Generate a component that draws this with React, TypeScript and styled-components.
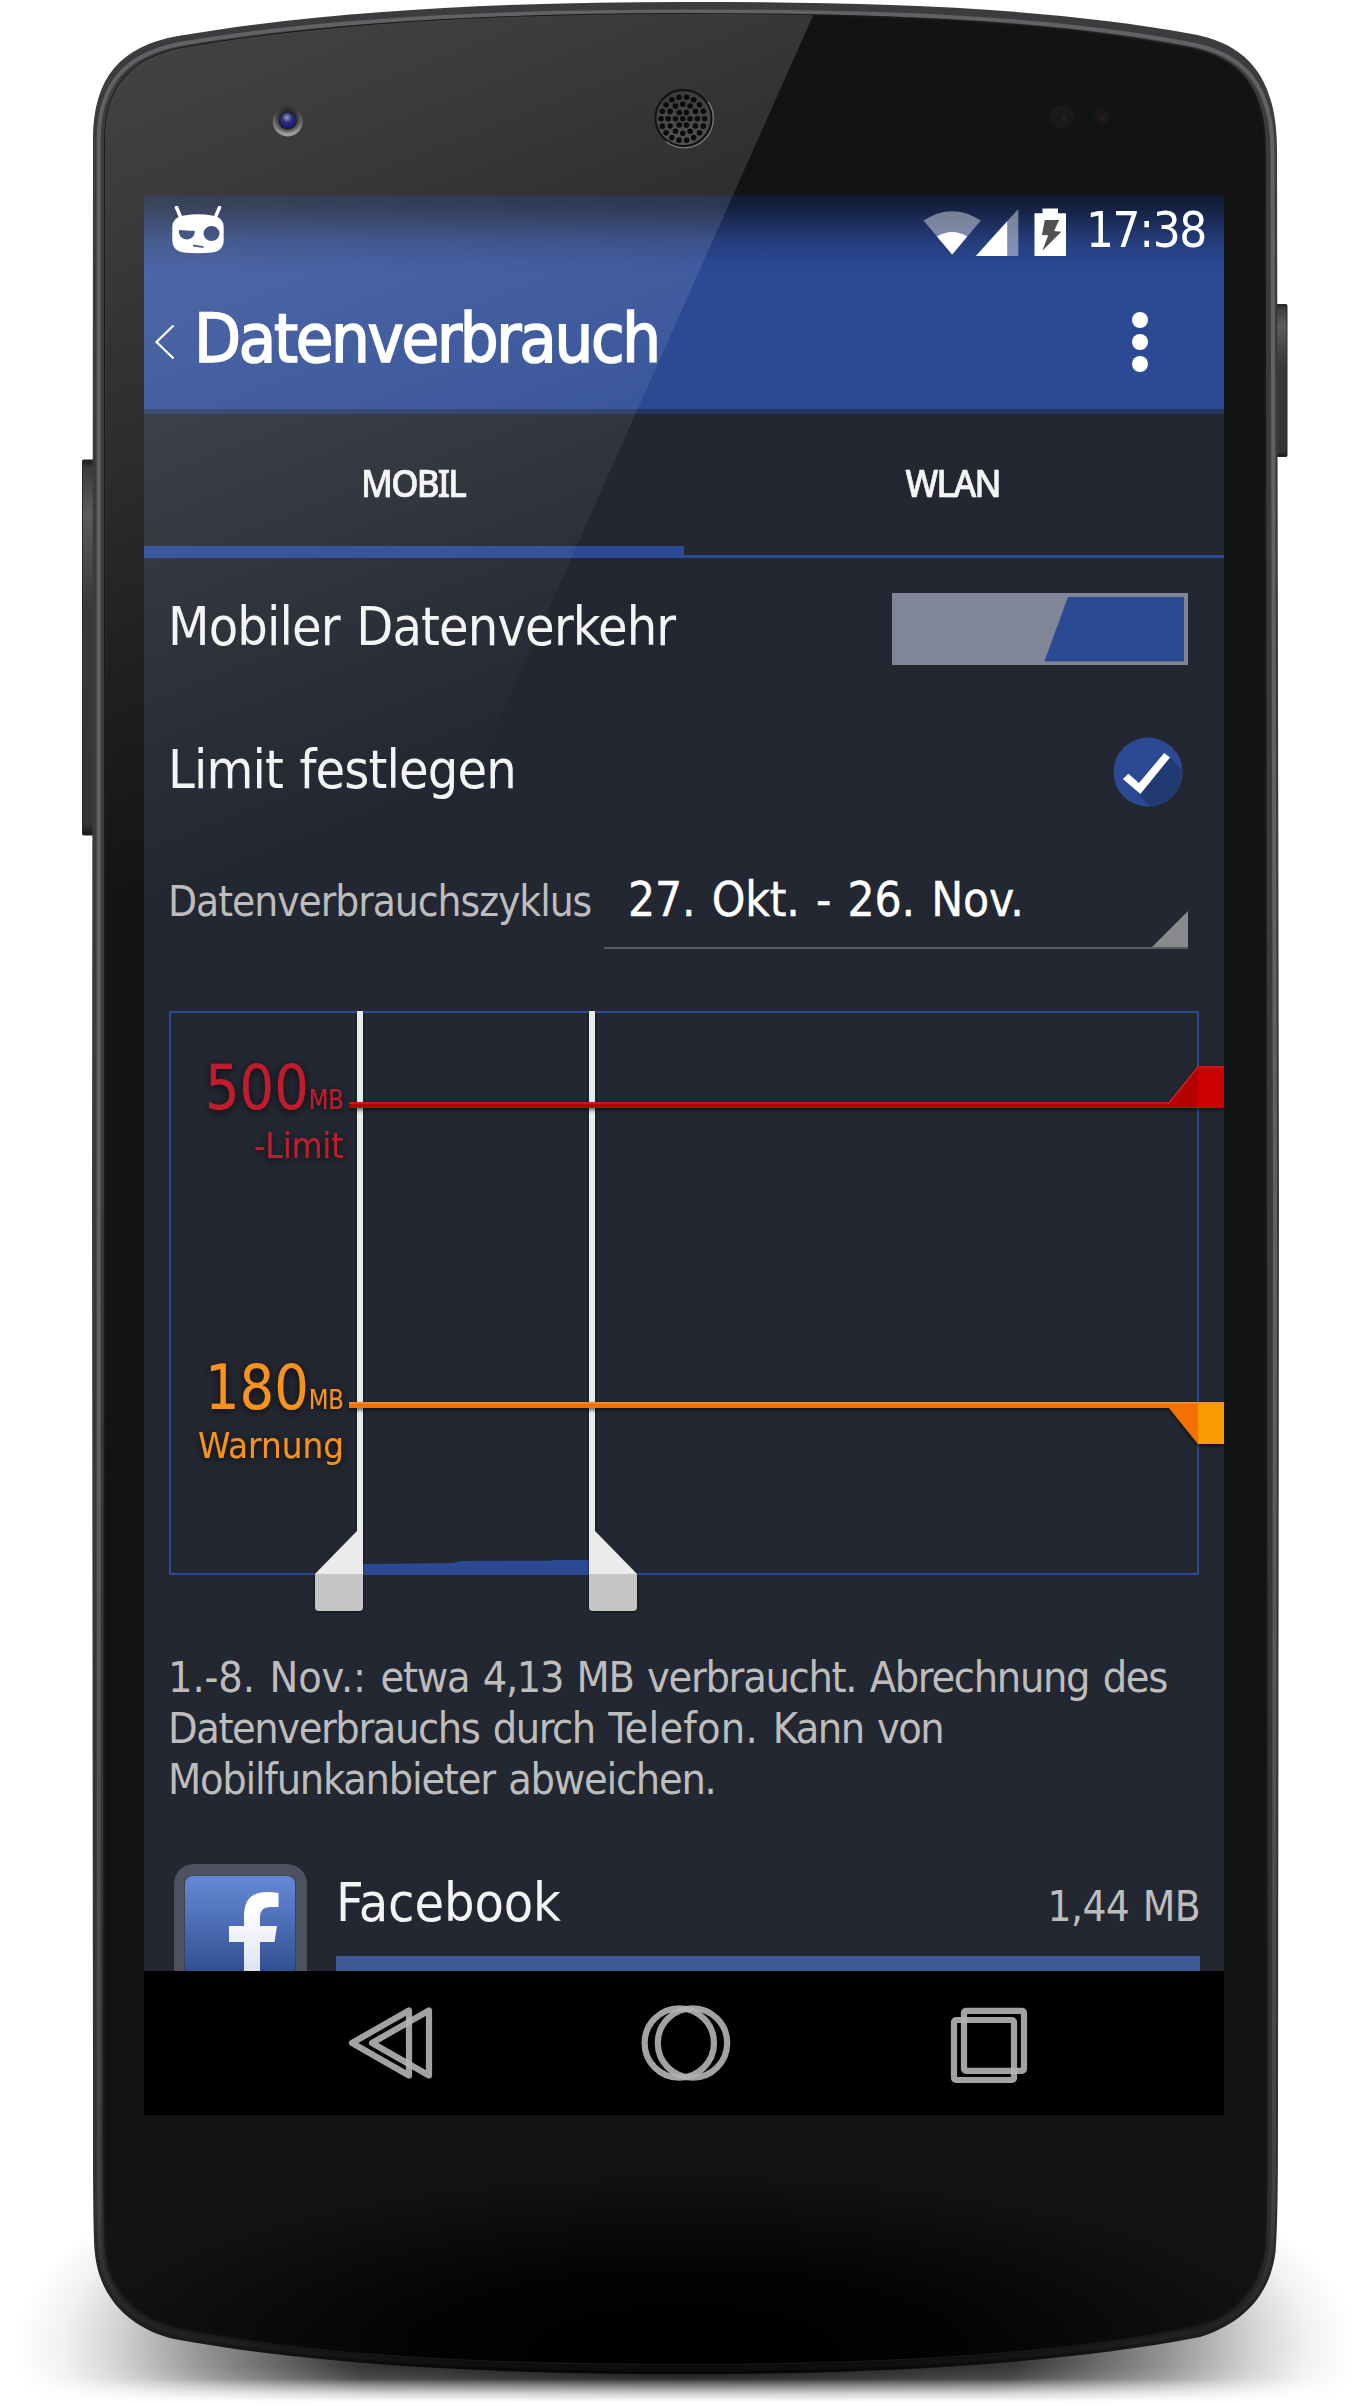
import React from "react";
import styled, { createGlobalStyle } from "styled-components";

const TEXT = '"DejaVu Sans Condensed", "DejaVu Sans", sans-serif';

const Global = createGlobalStyle`
  body { margin: 0; background: #fff; }
  * { box-sizing: border-box; }
`;

const Stage = styled.div`
  position: relative;
  width: 1370px;
  height: 2405px;
  padding: 195px 146px 0 144px;
  overflow: hidden;
  background: #fff;
  font-family: ${TEXT};
  font-stretch: condensed;
`;

const Layer = styled.svg`
  position: absolute;
  inset: 0;
  pointer-events: none;
`;

const Screen = styled.main`
  position: relative;
  display: flex;
  flex-direction: column;
  width: 1080px;
  height: 1920px;
  overflow: hidden;
  background: #232731;
`;

const Header = styled.header`
  height: 219px;
  border-bottom: 5px solid #253661;
  background: linear-gradient(#101a33 0px, #14203f 12px, #243c79 45px, #2a4791 68px, #2c4a94 80px);
`;

const StatusBar = styled.div`
  display: flex;
  align-items: center;
  height: 70px;
  padding: 1px 18px 0 28px;
`;

const StatusIcons = styled.div`
  display: flex;
  align-items: center;
  margin-left: auto;
`;

const Clock = styled.time`
  margin-left: 20px;
  color: #fff;
  font-size: 49px;
  line-height: 66px;
  letter-spacing: -1.4px;
`;

const AppBar = styled.div`
  display: flex;
  align-items: center;
  height: 144px;
  padding: 0 75px 0 10px;

  > svg {
    margin-top: 10px;
  }
`;

const Title = styled.h1`
  flex: 1;
  margin: 3px 0 0 18px;
  color: #fff;
  font-size: 68px;
  font-weight: 400;
  line-height: 80px;
  letter-spacing: -2.28px;
  -webkit-text-stroke: 1.7px #fff;
`;

const Tabs = styled.nav`
  display: flex;
  height: 144px;
`;

const Tab = styled.button<{ $active?: boolean }>`
  display: flex;
  flex: 1;
  align-items: center;
  justify-content: center;
  padding: 4px 2px 12px 0;
  border: 0;
  background: linear-gradient(#2c4a94, #2c4a94) bottom / 100% ${(p) => (p.$active ? 12 : 3)}px no-repeat;
  color: #f4f4f4;
  font-family: "Noto Sans", sans-serif;
  font-size: 37.5px;
  font-weight: 500;
  letter-spacing: -1.9px;
  -webkit-text-stroke: 0.7px #f4f4f4;
`;

const TabLabel = styled.span`
  transform: scaleX(0.93);
`;

const Content = styled.section`
  flex: 1;
  min-height: 0;
  overflow: hidden;
`;

const Row = styled.div<{ $height: number; $right: number }>`
  display: flex;
  align-items: center;
  justify-content: space-between;
  height: ${(p) => p.$height}px;
  padding: 0 ${(p) => p.$right}px 0 24px;
`;

const RowLabel = styled.span`
  padding-bottom: 5px;
  color: #f4f4f4;
  font-size: 53.5px;
  line-height: 60px;
  letter-spacing: -0.85px;
  word-spacing: 2px;
  white-space: nowrap;
`;

const CycleRow = styled.div`
  display: flex;
  height: 105px;
  padding: 0 36px 0 24px;
`;

const CycleLabel = styled.span`
  width: 436px;
  padding-top: 32px;
  color: #bdbdbd;
  font-size: 42px;
  line-height: 51px;
  letter-spacing: -1.02px;
  white-space: nowrap;
`;

const CycleSelect = styled.div`
  display: flex;
  flex: 1;
  justify-content: space-between;
  align-items: flex-end;
  border-bottom: 2px solid #58595d;
`;

const CycleValue = styled.span`
  align-self: flex-start;
  padding: 30px 0 0 24px;
  color: #fff;
  font-size: 47.5px;
  line-height: 51px;
  letter-spacing: -0.2px;
  word-spacing: 3px;
  white-space: nowrap;
  -webkit-text-stroke: 0.4px #fff;
`;

const ChartSvg = styled.svg`
  display: block;
  font-family: ${TEXT};
  font-stretch: condensed;
`;

const Summary = styled.p`
  margin: 0;
  padding-left: 24px;
  height: 212px;
  color: #bdbdbd;
  font-size: 42.8px;
  line-height: 51px;
  word-spacing: 2.5px;
  white-space: nowrap;
`;

const Line = styled.span`
  display: block;
`;

const Run = styled.span<{ $spacing: number }>`
  letter-spacing: ${(p) => p.$spacing}px;
`;

const AppRow = styled.div`
  display: flex;
  padding: 0 24px 0 30px;
`;

const AppInfo = styled.div`
  display: grid;
  flex: 1;
  grid-template-rows: 92px 20px;
  margin-left: 29px;
`;

const AppHead = styled.div`
  display: flex;
  align-items: flex-start;
  justify-content: space-between;
`;

const AppName = styled.span`
  padding-top: 9px;
  color: #f4f4f4;
  font-size: 53.5px;
  line-height: 60px;
  letter-spacing: -0.1px;
`;

const AppUsage = styled.span`
  padding-top: 13px;
  color: #bdbdbd;
  font-size: 42px;
  line-height: 60px;
  letter-spacing: -0.6px;
  word-spacing: 2px;
`;

const UsageBar = styled.div`
  background: #3e5896;
`;

const NavBar = styled.footer`
  display: flex;
  align-items: center;
  height: 144px;
  padding-left: 200px;
  background: #000;
`;

const NavIcon = styled.svg<{ $gap: number }>`
  margin-left: ${(p) => p.$gap}px;
`;

const BODY =
  "M93 140 C93 76 122 46 178 36 C330 10 510 2 685 2 C860 2 1040 6 1192 34 C1248 44 1277 78 1277 150 L1279 1200 L1278 2100 C1278 2170 1278 2225 1275.500 2252 C1270 2296 1242 2324 1200 2337 C1050 2366 860 2374 685 2374 C510 2374 325 2367 174 2339 C128 2328 98 2296 94.600 2250 C93 2225 93 2170 93 2100 L92 1200 Z";
const FACE =
  "M105 140 C105 88 130 58 182 48 C330 22 510 14 685 14 C860 14 1040 19 1188 48 C1240 58 1265 88 1265 150 L1266 1200 L1267 2100 C1267 2170 1267 2225 1265 2248 C1260 2288 1235 2316 1197 2326 C1050 2356 860 2364 685 2364 C510 2364 325 2358 178 2328 C134 2318 108 2288 105.500 2248 C104 2225 104 2170 104 2100 L105 1200 Z";
const EDGE =
  "M98.700 140 C98.700 84 126 54 180 44 C330 18 510 11.500 685 11.500 C860 11.500 1040 15 1190 44 C1243 54 1272 84 1272.500 150 L1275 1200 L1274 2100 C1274 2170 1274 2225 1271 2250 C1266 2292 1240 2320 1199 2331 C1050 2361 860 2369 685 2369 C510 2369 325 2362 176 2333 C131 2323 103 2292 100 2249 C98.700 2225 98.700 2170 98.700 2100 Z";

const RINGS = [
  { radius: 0, count: 1 },
  { radius: 7.2, count: 6 },
  { radius: 14.6, count: 12 },
  { radius: 21.8, count: 18 },
];

const speakerHoles = RINGS.flatMap(({ radius, count }) =>
  Array.from({ length: count }, (_, i) => {
    const angle = (i / count) * Math.PI * 2;
    return { x: Math.cos(angle) * radius, y: Math.sin(angle) * radius };
  })
);

function PhoneBody() {
  return (
    <Layer width="1370" height="2405" viewBox="0 0 1370 2405">
      <defs>
        <radialGradient id="wide" cx="0" cy="0" r="1" gradientUnits="userSpaceOnUse" gradientTransform="translate(685 2345) scale(670 250)">
          <stop offset="0" stopOpacity=".95" />
          <stop offset=".5" stopOpacity=".78" />
          <stop offset=".72" stopOpacity=".42" />
          <stop offset=".85" stopOpacity=".17" />
          <stop offset=".93" stopOpacity=".05" />
          <stop offset="1" stopOpacity="0" />
        </radialGradient>
        <linearGradient id="fade" x1="0" x2="0" y1="2366" y2="2402" gradientUnits="userSpaceOnUse">
          <stop offset="0" stopColor="#fff" />
          <stop offset=".35" stopColor="#e6e6e6" />
          <stop offset=".55" stopColor="#8a8a8a" />
          <stop offset=".78" stopColor="#333" />
          <stop offset="1" stopColor="#000" />
        </linearGradient>
        <mask id="floor" maskUnits="userSpaceOnUse" x="0" y="2050" width="1370" height="355">
          <rect y="2050" width="1370" height="355" fill="url(#fade)" />
        </mask>
        <linearGradient id="rim" x1="0" x2="0" y1="0" y2="2374" gradientUnits="userSpaceOnUse">
          <stop offset="0" stopColor="#3c3c3e" />
          <stop offset=".5" stopColor="#3a3a3c" />
          <stop offset=".93" stopColor="#303031" />
          <stop offset=".985" stopColor="#1c1c1c" />
          <stop offset="1" stopColor="#060606" />
        </linearGradient>
        <linearGradient id="shine" x1="0" x2="0" y1="0" y2="2374" gradientUnits="userSpaceOnUse">
          <stop offset="0" stopColor="#626266" />
          <stop offset=".6" stopColor="#606064" />
          <stop offset=".93" stopColor="#404042" />
          <stop offset=".985" stopColor="#202020" />
          <stop offset="1" stopColor="#0a0a0a" />
        </linearGradient>
        <radialGradient id="chin" cx="0" cy="0" r="1" gradientUnits="userSpaceOnUse" gradientTransform="translate(685 2350) scale(620 180)">
          <stop offset="0" stopColor="#000" />
          <stop offset=".4" stopColor="#000" stopOpacity=".9" />
          <stop offset=".7" stopColor="#000" stopOpacity=".45" />
          <stop offset="1" stopColor="#000" stopOpacity="0" />
        </radialGradient>
        <linearGradient id="key" x1="0" x2="0" y1="0" y2="1">
          <stop offset="0" stopColor="#1b1b1b" />
          <stop offset=".02" stopColor="#3a3a3a" />
          <stop offset=".14" stopColor="#5c5c5c" />
          <stop offset=".4" stopColor="#383838" />
          <stop offset=".97" stopColor="#343434" />
          <stop offset="1" stopColor="#151515" />
        </linearGradient>
      </defs>
      <g mask="url(#floor)">
        <rect y="2050" width="1370" height="355" fill="url(#wide)" />
      </g>
      <rect x="82.500" y="460" width="12" height="375" rx="1" fill="url(#key)" stroke="#2a2a2a" />
      <rect x="1275" y="304.500" width="12" height="152" rx="1" fill="url(#key)" stroke="#2a2a2a" />
      <path d={BODY} fill="url(#rim)" />
      <path d={EDGE} fill="none" stroke="url(#shine)" strokeWidth="4" />
      <path d={FACE} fill="#131313" stroke="#191919" strokeWidth="2" />
      <path d={FACE} fill="url(#chin)" />
      <g fill="#1a1919">
        <circle cx="1062" cy="117" r="12" />
        <circle cx="1102" cy="117" r="7.500" />
      </g>
      <ellipse cx="1064" cy="119" rx="2" ry="4" fill="#2c1d18" />
      <ellipse cx="1102" cy="118" rx="2" ry="3" fill="#2c1d18" />
    </Layer>
  );
}

function Gloss() {
  return (
    <Layer width="1370" height="2405" viewBox="0 0 1370 2405">
      <defs>
        <linearGradient id="gloss" x1="0" y1="0" x2="324" y2="837" gradientUnits="userSpaceOnUse">
          <stop offset="0" stopColor="#fff" stopOpacity=".22" />
          <stop offset=".27" stopColor="#fff" stopOpacity=".17" />
          <stop offset=".64" stopColor="#fff" stopOpacity=".08" />
          <stop offset=".83" stopColor="#fff" stopOpacity=".035" />
          <stop offset="1" stopColor="#fff" stopOpacity="0" />
        </linearGradient>
        <clipPath id="face">
          <path d={FACE} />
        </clipPath>
        <linearGradient id="camRing" x1="0" y1="0" x2="0" y2="1">
          <stop offset="0" stopColor="#2b2b2b" />
          <stop offset="1" stopColor="#a5a5a5" />
        </linearGradient>
        <linearGradient id="camInner" x1="0" y1="0" x2="0" y2="1">
          <stop offset="0" stopColor="#29292b" />
          <stop offset="1" stopColor="#6c6c6c" />
        </linearGradient>
        <linearGradient id="grille" x1="0" y1="0" x2="0" y2="1">
          <stop offset="0" stopColor="#3a3a3a" />
          <stop offset="1" stopColor="#555" />
        </linearGradient>
        <radialGradient id="lens" cx=".45" cy=".3" r=".7">
          <stop offset="0" stopColor="#8e9cc0" />
          <stop offset=".5" stopColor="#2a2f78" />
          <stop offset="1" stopColor="#17159a" />
        </radialGradient>
      </defs>
      <path d="M90 0 H820 L450 830 L360 1030 H90 Z" fill="url(#gloss)" clipPath="url(#face)" />
      <circle cx="287.700" cy="121.500" r="15" fill="url(#camRing)" />
      <circle cx="287.700" cy="120.500" r="12" fill="url(#camInner)" />
      <circle cx="287.700" cy="120.500" r="9.500" fill="#232328" />
      <circle cx="287.700" cy="120.500" r="7.500" fill="url(#lens)" />
      <circle cx="683.500" cy="118" r="28" fill="url(#grille)" stroke="#111" strokeWidth="2" />
      <path d="M666 141.500 A29.300 29.300 0 0 0 708 101.500" fill="none" stroke="#777" strokeWidth="1.300" />
      <g fill="#0b0b0b">
        {speakerHoles.map((hole, i) => (
          <circle key={i} cx={682.8 + hole.x} cy={118.7 + hole.y} r="2.800" />
        ))}
      </g>
    </Layer>
  );
}

function Chart() {
  return (
    <ChartSvg width="1080" height="703" viewBox="144 949 1080 703">
      <defs>
        <filter id="glow" x="-20%" y="-30%" width="140%" height="160%">
          <feDropShadow dx="0" dy="2" stdDeviation="4" floodColor="#000" floodOpacity=".75" />
        </filter>
        <filter id="drop" x="315" y="1000" width="909" height="650" filterUnits="userSpaceOnUse">
          <feDropShadow dx="0" dy="2" stdDeviation="2" floodColor="#000" floodOpacity=".6" />
        </filter>
        <filter id="soft" x="300" y="1000" width="360" height="640" filterUnits="userSpaceOnUse">
          <feDropShadow dx="0" dy="1" stdDeviation="1.500" floodColor="#000" floodOpacity=".6" />
        </filter>
      </defs>
      <rect x="170" y="1012" width="1028" height="562" fill="none" stroke="#2c4a94" strokeWidth="2" />
      <path d="M362 1575 V1564 L417 1563.500 L453 1563 L461 1561 L550 1560.700 L553 1560 H590 V1575 Z" fill="#2c4a94" />
      <g filter="url(#soft)">
        <path d="M357 1011 H363 V1574 H315 L357 1531 Z M589 1011 H595 V1531 L637 1574 H589 Z" fill="#ebebeb" />
        <path d="M315 1574 H363 V1607 Q363 1611 359 1611 H319 Q315 1611 315 1607 Z M589 1574 H637 V1607 Q637 1611 633 1611 H593 Q589 1611 589 1607 Z" fill="#c5c5c5" />
      </g>
      <g filter="url(#drop)">
        <path d="M349 1102 H1169 L1198 1066 H1224 V1108 H349 Z" fill="#b30000" />
        <rect x="1198" y="1066" width="26" height="42" fill="#cc0606" />
        <path d="M349 1103 H1169 L1198 1067 H1224" fill="none" stroke="#c62325" strokeWidth="1.600" />
        <path d="M349 1402 H1224 V1444 H1198 L1169 1408 H349 Z" fill="#f47000" />
        <rect x="1198" y="1402" width="26" height="42" fill="#f89a06" />
        <path d="M349 1402.700 H1224" stroke="#fa8c2c" strokeWidth="1.400" />
      </g>
      <g fill="#c01f2e" filter="url(#glow)">
        <text x="205" y="1108.500" fontSize="62" textLength="139" lengthAdjust="spacingAndGlyphs">
          500<tspan fontSize="26">MB</tspan>
        </text>
        <text x="254" y="1158" fontSize="35" textLength="89.500" lengthAdjust="spacingAndGlyphs">-Limit</text>
      </g>
      <g fill="#f7931c" filter="url(#glow)">
        <text x="205" y="1409" fontSize="62" textLength="139" lengthAdjust="spacingAndGlyphs">
          180<tspan fontSize="26">MB</tspan>
        </text>
        <text x="198" y="1458" fontSize="35" textLength="146" lengthAdjust="spacingAndGlyphs">Warnung</text>
      </g>
    </ChartSvg>
  );
}

export default function App() {
  return (
    <Stage>
      <Global />
      <PhoneBody />
      <Screen>
        <Header>
          <StatusBar>
            <svg width="52" height="50" viewBox="172 206 52 50">
              <path d="M176.500 207.500 L181 218 M219.500 207.500 L215 218" stroke="#fff" strokeWidth="3.500" strokeLinecap="round" />
              <path
                fill="#fff"
                fillRule="evenodd"
                d="M184 215.500 Q198 213 212 215.500 Q223.500 217 223.700 227 V240 Q223.500 251 212 252.500 Q198 254 184 252.500 Q172.500 251 172.300 240 V227 Q172.500 217 184 215.500 Z M179 230 V233 A8 8 0 0 0 194.700 233 V231 Z M203.500 233.500 A8 7.500 0 1 0 219.500 233.500 A8 7.500 0 1 0 203.500 233.500 Z M193 244.500 L193 246.500 L203.500 248 V246.300 Z"
              />
            </svg>
            <StatusIcons>
              <svg width="144" height="50" viewBox="922.5 205 144 50">
                <path d="M952.700 253.500 L924 219.500 Q952.700 201 981.300 219.500 Z" fill="#fff" fillOpacity=".42" />
                <path d="M952.700 253.500 L937.500 235.500 Q952.700 226.500 967.700 235.500 Z" fill="#fff" />
                <path d="M1007.900 220 L1018.800 208 V255 H1007.900 Z" fill="#fff" fillOpacity=".42" />
                <path d="M976.300 255 L1007.900 220 V255 Z" fill="#fff" />
                <path d="M1035 212.300 H1043 V207.500 H1058.500 V212.300 H1066.500 V255 H1035 Z" fill="#fff" />
                <path d="M1045.300 219 H1059.600 L1054.600 230 L1061.800 230.700 L1042.800 249.700 L1048.700 234.300 L1042.400 234 Z" fill="#505050" />
              </svg>
              <Clock>17:38</Clock>
            </StatusIcons>
          </StatusBar>
          <AppBar>
            <svg width="22" height="38" viewBox="154 323 22 38">
              <path d="M173.500 325.500 L156.500 342 L173.500 358.500" fill="none" stroke="#fff" strokeWidth="2.200" />
            </svg>
            <Title>Datenverbrauch</Title>
            <svg width="18" height="68" viewBox="1131 308 18 68">
              <g fill="#fff">
                <circle cx="1140" cy="320" r="8" />
                <circle cx="1140" cy="342" r="8" />
                <circle cx="1140" cy="364" r="8" />
              </g>
            </svg>
          </AppBar>
        </Header>
        <Tabs>
          <Tab $active>
            <TabLabel>MOBIL</TabLabel>
          </Tab>
          <Tab>
            <TabLabel>WLAN</TabLabel>
          </Tab>
        </Tabs>
        <Content>
          <Row $height={142} $right={36}>
            <RowLabel>Mobiler Datenverkehr</RowLabel>
            <svg width="296" height="72" viewBox="892 593 296 72">
              <rect x="892" y="593" width="296" height="72" fill="#808598" />
              <path d="M1068 598.500 H1184 V662 H1044.500 Z" fill="#656a7e" />
              <path d="M1068 597 H1184 V661 H1044.500 Z" fill="#2c4a94" />
            </svg>
          </Row>
          <Row $height={144} $right={41}>
            <RowLabel>Limit festlegen</RowLabel>
            <svg width="70" height="70" viewBox="1112.600 737 70 70">
              <circle cx="1147.600" cy="772" r="34.500" fill="#2c4a94" />
              <path d="M1169.600 757.500 L1181.500 770 A34 34 0 0 1 1149 806 L1136 791 Z" fill="#213a72" />
              <path d="M1122.500 779 L1128 773.700 L1138.600 783 L1163.800 753 L1169.600 757.500 L1140 794 Z" fill="#fff" />
            </svg>
          </Row>
          <CycleRow>
            <CycleLabel>Datenverbrauchszyklus</CycleLabel>
            <CycleSelect>
              <CycleValue>27. Okt. - 26. Nov.</CycleValue>
              <svg width="36" height="36" viewBox="0 0 36 36">
                <path d="M36 0 V36 H0 Z" fill="#898a8d" />
              </svg>
            </CycleSelect>
          </CycleRow>
          <Chart />
          <Summary>
            <Line>
              <Run $spacing={-0.1}>1.-8. Nov.: </Run>
              <Run $spacing={-1.3}>etwa 4,13 MB verbraucht. Abrechnung des</Run>
            </Line>
            <Line>
              <Run $spacing={-1.42}>Datenverbrauchs durch </Run>
              <Run $spacing={0.2}>Telefon. </Run>
              <Run $spacing={-1.5}>Kann von</Run>
            </Line>
            <Line>
              <Run $spacing={-1.25}>Mobilfunkanbieter abweichen.</Run>
            </Line>
          </Summary>
          <AppRow>
            <svg width="133" height="133" viewBox="174 1864 133 133">
              <defs>
                <linearGradient id="fb" x1="0" y1="1876" x2="0" y2="1980" gradientUnits="userSpaceOnUse">
                  <stop offset="0" stopColor="#6488d4" />
                  <stop offset=".3" stopColor="#5678c2" />
                  <stop offset="1" stopColor="#2c4a8a" />
                </linearGradient>
                <linearGradient id="fbf" x1="0" y1="1892" x2="0" y2="1975" gradientUnits="userSpaceOnUse">
                  <stop offset=".2" stopColor="#fff" />
                  <stop offset="1" stopColor="#dbe2f2" />
                </linearGradient>
              </defs>
              <rect x="174" y="1864" width="133" height="133" rx="20" fill="#4d5160" />
              <rect x="184" y="1875.500" width="112" height="112" rx="8" fill="#3d4152" />
              <rect x="185" y="1876" width="110" height="110" rx="8" fill="url(#fb)" />
              <path
                fill="url(#fbf)"
                d="M244 1990 V1942 H229 V1926 H244 V1916 Q244 1892 267 1892 Q274 1892 278.500 1893 V1907 H270 Q260 1907 260 1917 V1926 H277 L274.500 1942 H260 V1990 Z"
              />
            </svg>
            <AppInfo>
              <AppHead>
                <AppName>Facebook</AppName>
                <AppUsage>1,44 MB</AppUsage>
              </AppHead>
              <UsageBar />
            </AppInfo>
          </AppRow>
        </Content>
        <NavBar>
          <NavIcon $gap={0} width="92" height="84" viewBox="344 2001 92 84" fill="none" stroke="#b4b4b4" strokeOpacity=".9" strokeWidth="6.200" strokeLinejoin="round">
            <path d="M352 2043 L409 2010.500 V2075.500 Z" />
            <path d="M372 2043 L429 2010.500 V2075.500 Z" />
          </NavIcon>
          <NavIcon $gap={202} width="96" height="84" viewBox="638 2001 96 84" fill="none" stroke="#b4b4b4" strokeOpacity=".9" strokeWidth="6.200">
            <circle cx="679.300" cy="2043" r="34.700" />
            <circle cx="692.500" cy="2043" r="34.700" />
          </NavIcon>
          <NavIcon $gap={214} width="84" height="84" viewBox="948 2001 84 84" fill="none" stroke="#b4b4b4" strokeOpacity=".9" strokeWidth="6.200">
            <rect x="954" y="2020" width="60" height="60" rx="2" />
            <rect x="964" y="2010.800" width="60" height="60" rx="2" />
          </NavIcon>
        </NavBar>
      </Screen>
      <Gloss />
    </Stage>
  );
}
